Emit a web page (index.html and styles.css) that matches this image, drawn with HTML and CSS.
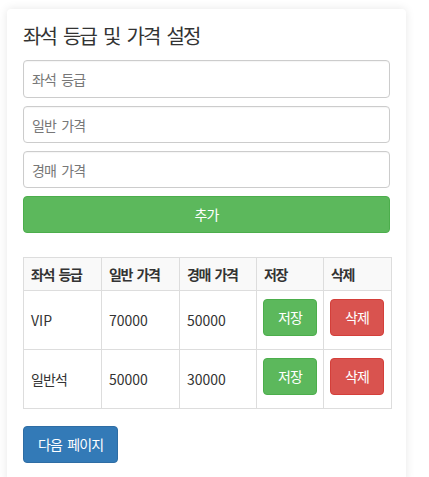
FILE: index.html
```html
<!DOCTYPE html>
<html lang="ko">
<head>
<meta charset="utf-8">
<title>좌석 등급 및 가격 설정</title>
<link rel="stylesheet" href="styles.css">
</head>
<body>
<div class="card">
  <h3 class="title ko">좌석 등급 및 가격 설정</h3>
  <form class="form">
    <input class="field ko" type="text" placeholder="좌석 등급">
    <input class="field ko" type="text" placeholder="일반 가격">
    <input class="field ko" type="text" placeholder="경매 가격">
    <button type="button" class="btn btn-success btn-block ko">추가</button>
  </form>
  <table class="grid">
    <colgroup>
      <col class="c1"><col class="c2"><col class="c3"><col class="c4"><col class="c5">
    </colgroup>
    <thead>
      <tr><th class="ko">좌석 등급</th><th class="ko">일반 가격</th><th class="ko">경매 가격</th><th class="ko">저장</th><th class="ko">삭제</th></tr>
    </thead>
    <tbody>
      <tr>
        <td>VIP</td><td>70000</td><td>50000</td>
        <td class="act"><button type="button" class="btn btn-success ko">저장</button></td>
        <td class="act"><button type="button" class="btn btn-danger ko">삭제</button></td>
      </tr>
      <tr>
        <td class="ko">일반석</td><td>50000</td><td>30000</td>
        <td class="act"><button type="button" class="btn btn-success ko">저장</button></td>
        <td class="act"><button type="button" class="btn btn-danger ko">삭제</button></td>
      </tr>
    </tbody>
  </table>
  <button type="button" class="btn btn-primary ko">다음 페이지</button>
</div>
</body>
</html>
```
FILE: styles.css
```css
* { box-sizing: border-box; }
html, body { background: #fff; }
body {
  margin: 0;
  padding: 9px 0 0 7px;
  font-family: "Noto Sans CJK KR", "Liberation Sans", sans-serif;
  font-size: 14px;
  line-height: 20px;
  color: #333;
}
.ko { letter-spacing: -0.06em; word-spacing: 2px; }
.card {
  width: 399px;
  background: #fff;
  border-radius: 4px;
  box-shadow: 0 0 10px rgba(0, 0, 0, 0.1);
  padding: 16px 16px 20px;
}
.title {
  margin: 0 0 13px;
  font-size: 20px;
  line-height: 22px;
  font-weight: 400;
  color: #333;
  letter-spacing: -0.09em;
  word-spacing: 3px;
}
.form { display: flex; flex-direction: column; gap: 8px; margin: 0; }
.field {
  height: 37px;
  width: 100%;
  border: 1px solid #ccc;
  border-radius: 4px;
  padding: 0 8px;
  font: inherit;
  color: #555;
  box-shadow: inset 0 1px 1px rgba(0,0,0,0.04);
}
.field:first-child { height: 38px; }
.field::placeholder { color: #777; letter-spacing: -0.06em; word-spacing: 2px; }
.btn {
  display: inline-block;
  height: 37px;
  padding: 8px 12px;
  border: 1px solid transparent;
  border-radius: 4px;
  font: inherit;
  line-height: 19px;
  color: #fff;
  cursor: pointer;
  text-align: center;
}
.btn-block { width: 100%; }
.btn-success { background: #5cb85c; border-color: #4cae4c; }
.btn-danger { background: #d9534f; border-color: #d43f3a; }
.btn-primary { background: #337ab7; border-color: #2e6da4; padding: 8px 14px; }
.grid {
  width: 368px;
  margin: 24px 0 17px;
  border-collapse: collapse;
  table-layout: fixed;
}
.c1 { width: 78px; }
.c2 { width: 78px; }
.c3 { width: 77px; }
.c4 { width: 67px; }
.c5 { width: 68px; }
.grid th, .grid td {
  border: 1px solid #ddd;
  padding: 0 7px;
  text-align: left;
  vertical-align: middle;
}
.grid th {
  height: 33px;
  font-weight: 700;
  background: #f9f9f9;
  letter-spacing: -0.1em;
}
.grid td { height: 59px; }
.grid td.act { padding: 0 6px; }
.grid td .btn { width: 54px; padding: 8px 0; margin: 0 0 6px; vertical-align: top; }
```
